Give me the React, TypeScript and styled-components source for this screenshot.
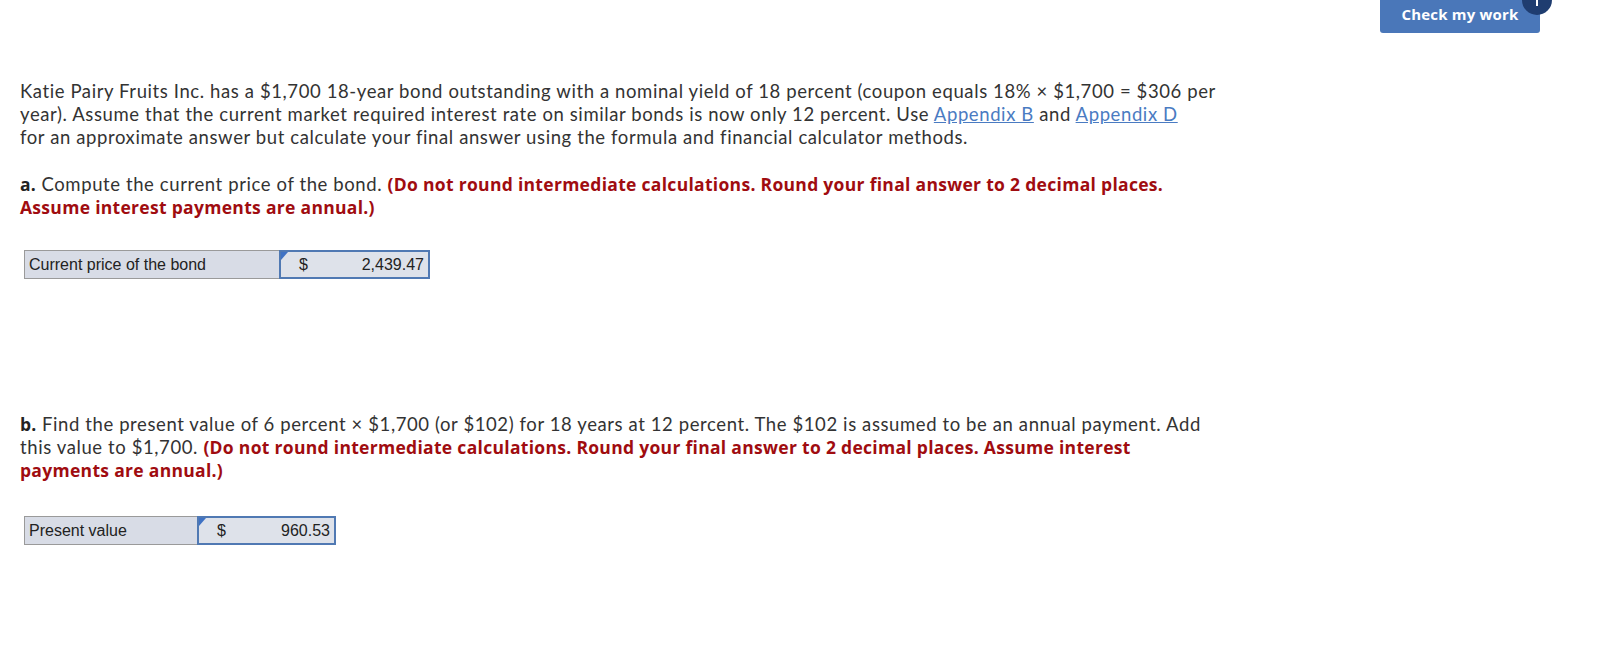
import React from "react";
import styled, { createGlobalStyle } from "styled-components";

const GlobalStyle = createGlobalStyle`
  body {
    margin: 0;
    background: #ffffff;
    font-family: Lato, "Open Sans", sans-serif;
  }
`;

const Page = styled.div`
  width: 1603px;
  min-height: 670px;
  position: relative;
`;

const TopBar = styled.div`
  display: flex;
  justify-content: flex-end;
  padding-right: 63px;
`;

const CheckButton = styled.button`
  position: relative;
  width: 160px;
  height: 33px;
  border: none;
  border-radius: 0 0 3px 3px;
  background: #4a77b9;
  color: #ffffff;
  font-family: "Open Sans", sans-serif;
  font-weight: 700;
  font-size: 15px;
  letter-spacing: 0.2px;
  padding: 0 0 6px;
  cursor: pointer;
`;

const Badge = styled.span`
  position: absolute;
  top: -15px;
  right: -12px;
  width: 30px;
  height: 30px;
  border-radius: 50%;
  background: #1f3d70;
  &::after {
    content: "";
    position: absolute;
    left: 14px;
    top: 15px;
    width: 2px;
    height: 6px;
    background: #ffffff;
  }
`;

const Content = styled.div`
  width: 1260px;
  padding: 47px 0 0 20px;
  color: #333333;
  font-size: 18.5px;
  line-height: 23px;
  letter-spacing: 0.6px;
`;

const Para = styled.p`
  margin: 0 0 24px;
`;

const Link = styled.a`
  color: #4a7bc2;
  text-decoration: underline;
`;

const Part = styled.b`
  font-family: "Open Sans", sans-serif;
  font-size: 17.5px;
  letter-spacing: 0.3px;
  color: #222222;
`;

const Note = styled.b`
  font-family: "Open Sans", sans-serif;
  font-size: 17.5px;
  letter-spacing: 0.3px;
  color: #a00c10;
`;

const AnswerTable = styled.div<{ $gapTop: number }>`
  display: flex;
  margin: ${(p) => p.$gapTop}px 0 0 4px;
  font-family: "Liberation Sans", Arial, sans-serif;
  font-size: 16px;
  letter-spacing: 0;
  color: #222222;
`;

const LabelCell = styled.div<{ $w: number }>`
  width: ${(p) => p.$w}px;
  height: 29px;
  box-sizing: border-box;
  border: 1px solid #9a9a9a;
  border-right: none;
  background: #d8dce6;
  display: flex;
  align-items: center;
  padding-left: 4px;
`;

const ValueCell = styled.div<{ $w: number }>`
  position: relative;
  width: ${(p) => p.$w}px;
  height: 29px;
  box-sizing: border-box;
  border: 2px solid #5079b3;
  background: #dee2ea;
  display: flex;
  align-items: center;
  justify-content: space-between;
  padding: 0 4px 0 18px;
  &::before {
    content: "";
    position: absolute;
    left: 0;
    top: 0;
    border-top: 8px solid #3f72c4;
    border-right: 7px solid transparent;
  }
`;

const Spacer = styled.div`
  height: 134px;
`;

export default function App() {
  return (
    <Page>
      <GlobalStyle />
      <TopBar>
        <CheckButton>
          Check my work
          <Badge />
        </CheckButton>
      </TopBar>
      <Content>
        <Para>
          Katie Pairy Fruits Inc. has a $1,700 18-year bond outstanding with a nominal yield of 18 percent
          (coupon equals 18% × $1,700 = $306 per
          <br />
          year). Assume that the current market required interest rate on similar bonds is now only 12
          percent. Use <Link href="#">Appendix B</Link> and <Link href="#">Appendix D</Link>
          <br />
          for an approximate answer but calculate your final answer using the formula and financial
          calculator methods.
        </Para>
        <Para>
          <Part>a.</Part> Compute the current price of the bond.{" "}
          <Note>
            (Do not round intermediate calculations. Round your final answer to 2 decimal places.
            <br />
            Assume interest payments are annual.)
          </Note>
        </Para>
        <AnswerTable $gapTop={31}>
          <LabelCell $w={255}>Current price of the bond</LabelCell>
          <ValueCell $w={151}>
            <span>$</span>
            <span>2,439.47</span>
          </ValueCell>
        </AnswerTable>
        <Spacer />
        <Para>
          <Part>b.</Part> Find the present value of 6 percent × $1,700 (or $102) for 18 years at 12 percent.
          The $102 is assumed to be an annual payment. Add
          <br />
          this value to $1,700.{" "}
          <Note>
            (Do not round intermediate calculations. Round your final answer to 2 decimal places. Assume
            interest
            <br />
            payments are annual.)
          </Note>
        </Para>
        <AnswerTable $gapTop={34}>
          <LabelCell $w={173}>Present value</LabelCell>
          <ValueCell $w={139}>
            <span>$</span>
            <span>960.53</span>
          </ValueCell>
        </AnswerTable>
      </Content>
    </Page>
  );
}
